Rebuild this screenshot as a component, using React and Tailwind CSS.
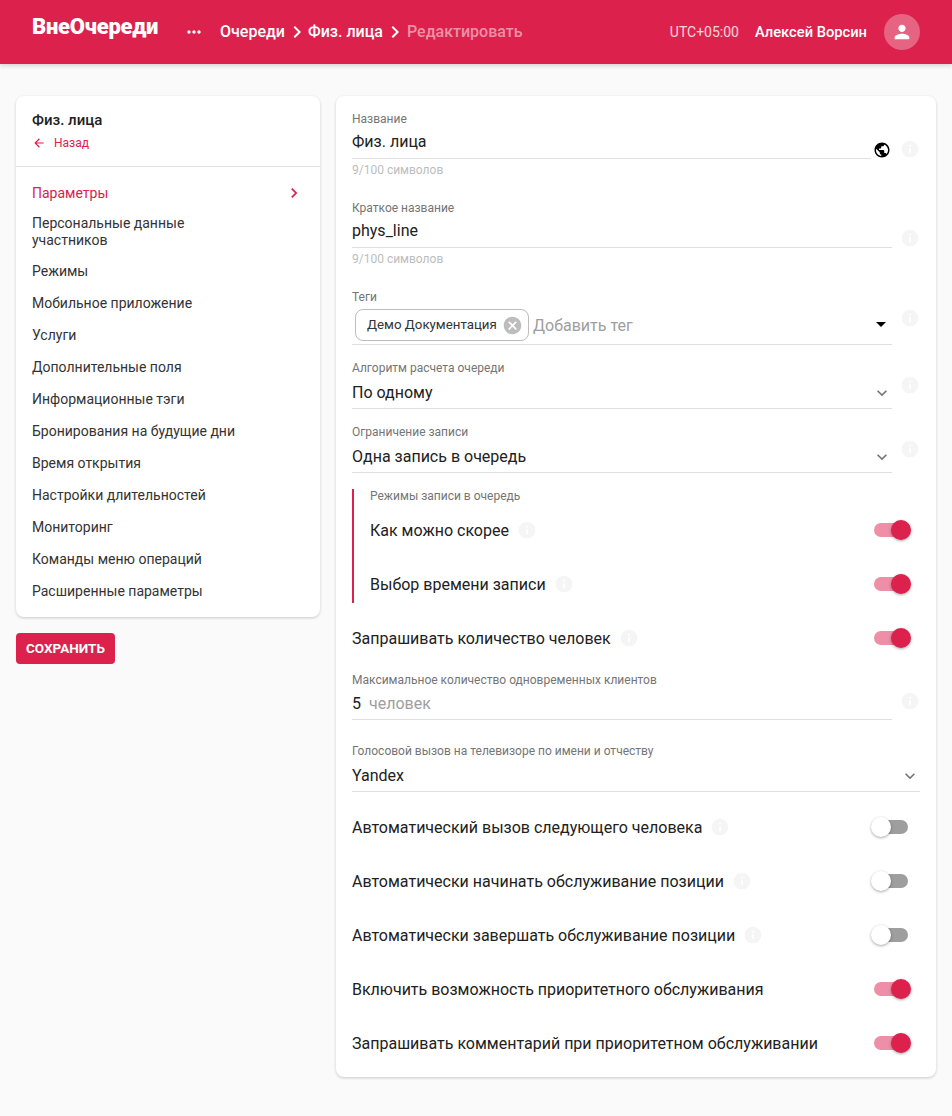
import React from 'react'
import {
  MdMoreHoriz, MdChevronRight, MdPerson, MdArrowBack, MdInfo, MdCancel,
  MdArrowDropDown, MdExpandMore, MdPublic,
} from 'react-icons/md'

const MENU = [
  'Режимы',
  'Мобильное приложение',
  'Услуги',
  'Дополнительные поля',
  'Информационные тэги',
  'Бронирования на будущие дни',
  'Время открытия',
  'Настройки длительностей',
  'Мониторинг',
  'Команды меню операций',
  'Расширенные параметры',
]

function Info({ className = '' }) {
  return <MdInfo size={20} className={`text-[#f5f5f5] shrink-0 ${className}`} />
}

function Label({ children }) {
  return <div className="h-[14px] text-[12px] leading-[14px] text-[#757575]">{children}</div>
}

function Toggle({ on }) {
  return (
    <div className="relative w-[34px] h-[14px] shrink-0">
      <div className={`h-full rounded-full ${on ? 'bg-[#ee8fa7]' : 'bg-[#9e9e9e]'}`} />
      <div
        className={`absolute top-[-3px] w-[20px] h-[20px] rounded-full shadow-[0_1px_3px_rgba(0,0,0,0.35)] ${
          on ? 'left-[17px] bg-[#db214c]' : 'left-[-3px] bg-white'
        }`}
      />
    </div>
  )
}

function SwitchRow({ label, on, info = true, className = '' }) {
  return (
    <div className={`h-[38px] flex items-center ${className}`}>
      <span className="mt-[2px] text-[16px] text-[#212121]">{label}</span>
      {info && <Info className="ml-[8px]" />}
      <div className="ml-auto mr-[12px] flex">
        <Toggle on={on} />
      </div>
    </div>
  )
}

function TextField({ label, value, wide, infoClass = 'mt-[14px]', boxClass = 'h-[34px] pt-[3px]' }) {
  return (
    <div className="flex items-start">
      <div className={wide ? 'w-[568px]' : 'w-[540px]'}>
        <Label>{label}</Label>
        <div className={`${boxClass} flex items-center justify-between border-b border-[#e0e0e0] text-[16px] text-[#212121]`}>
          {value}
        </div>
      </div>
      {!wide && <Info className={`ml-[8px] ${infoClass}`} />}
    </div>
  )
}

function Select({ label, value, wide }) {
  return (
    <TextField
      label={label}
      wide={wide}
      value={
        <>
          <span>{value}</span>
          <MdExpandMore size={20} className="text-[#757575]" />
        </>
      }
    />
  )
}

export default function App() {
  return (
    <div className="min-h-screen bg-[#fafafa] font-['Roboto',sans-serif] text-[#212121]">
      {/* Top bar */}
      <header className="h-[64px] bg-[#db214c] text-white flex items-center pl-[32px] pr-[32px] shadow-[0_2px_4px_rgba(0,0,0,0.15)]">
        <div className="w-[146px] text-[22px] leading-none font-black tracking-[-0.25px] whitespace-nowrap mb-[11px]">ВнеОчереди</div>
        <MdMoreHoriz size={20} className="mr-[16px] ml-[6px]" />
        <div className="flex items-center text-[16px] font-medium">
          <span>Очереди</span>
          <MdChevronRight size={24} className="-mr-[1px]" />
          <span>Физ. лица</span>
          <MdChevronRight size={24} />
          <span className="text-white/50">Редактировать</span>
        </div>
        <div className="ml-auto flex items-center">
          <span className="text-[14px] text-white/80">UTC+05:00</span>
          <span className="ml-[16px] text-[14.7px] font-medium">Алексей Ворсин</span>
          <div className="ml-[17px] w-[36px] h-[36px] rounded-full bg-white/30 flex items-center justify-center">
            <MdPerson size={22} />
          </div>
        </div>
      </header>

      <div className="flex items-start gap-[16px] px-[16px] pt-[32px]">
        {/* Sidebar */}
        <aside className="w-[304px] shrink-0">
          <div className="bg-white rounded-[8px] shadow-[0_1px_3px_rgba(0,0,0,0.2)] pb-[10px]">
            <div className="h-[71px] px-[16px] pt-[16px] border-b border-[#e0e0e0]">
              <div className="text-[15px] leading-[17px] font-medium">Физ. лица</div>
              <div className="mt-[7px] flex items-center text-[12px] leading-[14px] text-[#db214c]">
                <MdArrowBack size={14} />
                <span className="ml-[8px]">Назад</span>
              </div>
            </div>
            <nav className="pt-[10px] text-[14px] leading-[17px] text-[#333333]">
              <div className="min-h-[32px] px-[16px] flex items-center justify-between text-[#db214c]">
                <span>Параметры</span>
                <MdChevronRight size={20} />
              </div>
              <div className="px-[16px] py-[6px] w-[230px]">Персональные данные участников</div>
              {MENU.map((item) => (
                <div key={item} className="min-h-[32px] px-[16px] flex items-center">{item}</div>
              ))}
            </nav>
          </div>
          <button className="mt-[16px] h-[31px] px-[10px] rounded-[4px] bg-[#db214c] text-white text-[13.5px] font-bold uppercase">
            Сохранить
          </button>
        </aside>

        {/* Form */}
        <main className="w-[600px] bg-white rounded-[8px] shadow-[0_1px_3px_rgba(0,0,0,0.2)] px-[16px] pt-[16px] pb-[15px]">
          <div className="flex items-start">
            <div className="w-[540px]">
              <Label>Название</Label>
              <div className="flex items-end">
                <div className="w-[519px] h-[33px] flex items-center border-b border-[#e0e0e0] text-[16px]">Физ. лица</div>
                <MdPublic size={18} className="text-black ml-[2px]" />
              </div>
              <div className="mt-[4px] text-[12px] leading-[14px] text-[#bdbdbd]">9/100 символов</div>
            </div>
            <Info className="ml-[8px] mt-[27px]" />
          </div>

          <div className="mt-[24px] flex items-start">
            <div className="w-[540px]">
              <Label>Краткое название</Label>
              <div className="h-[33px] flex items-center border-b border-[#e0e0e0] text-[16px]">phys_line</div>
              <div className="mt-[4px] text-[12px] leading-[14px] text-[#bdbdbd]">9/100 символов</div>
            </div>
            <Info className="ml-[8px] mt-[27px]" />
          </div>

          <div className="mt-[24px] flex items-start">
            <div className="w-[540px]">
              <Label>Теги</Label>
              <div className="h-[41px] pt-[5px] pl-[3px] flex items-start border-b border-[#e0e0e0]">
                <div className="h-[32px] w-[174px] pl-[11px] flex items-center border border-[#bdbdbd] rounded-[8px] text-[13.3px] text-[#333333]">
                  Демо Документация
                  <MdCancel size={21} className="ml-[5px] text-[#bdbdbd]" />
                </div>
                <span className="ml-[4px] mt-[7px] text-[16px] leading-[19px] text-[#9e9e9e]">Добавить тег</span>
                <MdArrowDropDown size={24} className="ml-auto mt-[3px] -mr-[1px] text-black" />
              </div>
            </div>
            <Info className="ml-[8px] mt-[18px]" />
          </div>

          <div className="mt-[16px]">
            <Select label="Алгоритм расчета очереди" value="По одному" />
          </div>
          <div className="mt-[16px]">
            <Select label="Ограничение записи" value="Одна запись в очередь" />
          </div>

          {/* Queue modes */}
          <div className="mt-[16px] border-l-2 border-[#db214c] pl-[16px]">
            <Label>Режимы записи в очередь</Label>
            <SwitchRow className="mt-[8px]" label="Как можно скорее" on />
            <SwitchRow className="mt-[16px]" label="Выбор времени записи" on />
          </div>

          <SwitchRow className="mt-[16px]" label="Запрашивать количество человек" on />

          <div className="mt-[16px]">
            <TextField
              label="Максимальное количество одновременных клиентов"
              boxClass="h-[33px] pt-[2px]"
              infoClass="mt-[18px]"
              value={
                <span>
                  5<span className="ml-[8px] text-[#9e9e9e]">человек</span>
                </span>
              }
            />
          </div>

          <div className="mt-[24px]">
            <Select wide label="Голосовой вызов на телевизоре по имени и отчеству" value="Yandex" />
          </div>

          <SwitchRow className="mt-[16px]" label="Автоматический вызов следующего человека" />
          <SwitchRow className="mt-[16px]" label="Автоматически начинать обслуживание позиции" />
          <SwitchRow className="mt-[16px]" label="Автоматически завершать обслуживание позиции" />
          <SwitchRow className="mt-[16px]" label="Включить возможность приоритетного обслуживания" on info={false} />
          <SwitchRow className="mt-[16px]" label="Запрашивать комментарий при приоритетном обслуживании" on info={false} />
        </main>
      </div>
    </div>
  )
}
